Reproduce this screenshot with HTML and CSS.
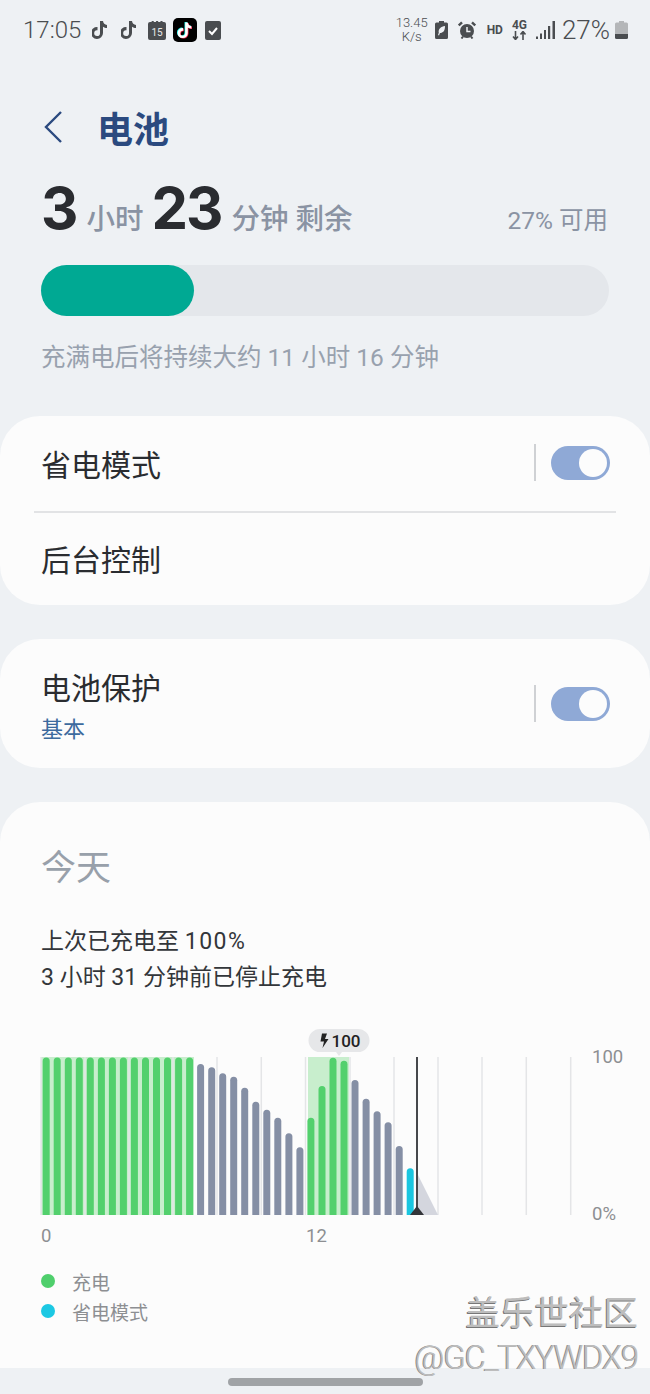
FILE: index.html
```html
<!DOCTYPE html>
<html lang="zh-CN">
<head>
<meta charset="UTF-8" />
<meta name="viewport" content="width=device-width, initial-scale=1" />
<title>电池</title>
<link rel="stylesheet" href="styles.css">
</head>
<body>

<div class="status-bar">
  <div class="status-left">
    <span class="clock">17:05</span>
    <svg class="ic-note" viewBox="0 0 16 18"><path d="M8 0h3c.2 2.2 1.8 3.8 4 4v3c-1.500 0-2.900-.5-4-1.300V12a6 6 0 1 1-5.500-6v3.200A2.900 2.900 0 1 0 8 12z"/></svg>
    <svg class="ic-note ic-note2" viewBox="0 0 16 18"><path d="M8 0h3c.2 2.200 1.800 3.800 4 4v3c-1.500 0-2.900-.5-4-1.300V12a6 6 0 1 1-5.500-6v3.200A2.900 2.900 0 1 0 8 12z"/></svg>
    <svg class="ic-cal" viewBox="0 0 18 19">
      <path fill="#4a4d50" d="M0 3a2 2 0 0 1 2-2h1.500a1.200 1.200 0 0 1 2.400 0h2a1.200 1.200 0 0 1 2.400 0h2a1.200 1.200 0 0 1 2.400 0H16a2 2 0 0 1 2 2v14a2 2 0 0 1-2 2H2a2 2 0 0 1-2-2z"/>
      <text class="cal-day" x="9" y="14.500">15</text>
    </svg>
    <svg class="ic-tiktok" viewBox="0 0 24 24">
      <rect width="24" height="24" rx="5" fill="#000"/>
      <path fill="#25f4ee" d="M11.500 4h2.600c.2 1.900 1.500 3.300 3.500 3.500v2.600c-1.300 0-2.500-.4-3.500-1.100v5.500a5.100 5.100 0 1 1-4.700-5.100v2.800a2.500 2.500 0 1 0 2.100 2.400z"/>
      <path fill="#fe2c55" d="M12.900 5h2.600c.2 1.900 1.500 3.300 3.500 3.500v2.600c-1.300 0-2.500-.4-3.500-1.100v5.500a5.100 5.100 0 1 1-4.700-5.100v2.800a2.500 2.500 0 1 0 2.100 2.400z"/>
      <path fill="#fff" d="M12.200 4.500h2.600c.2 1.900 1.500 3.300 3.500 3.500v2.600c-1.300 0-2.500-.4-3.500-1.100V15a5.100 5.100 0 1 1-4.700-5.100v2.800a2.500 2.500 0 1 0 2.100 2.400z"/>
    </svg>
    <svg class="ic-check" viewBox="0 0 16 19"><rect width="16" height="19" rx="2" fill="#4a4d50"/><path d="M4 10l3 3 5-6" fill="none" stroke="#fff" stroke-width="2"/></svg>
  </div>
  <div class="status-right">
    <span class="speed">13.45<br>K/s</span>
    <svg class="ic-saver" viewBox="0 0 13 18"><path fill="#4a4d50" d="M4 0h5v1.500h2.500a1.500 1.500 0 0 1 1.500 1.500v13.500a1.500 1.500 0 0 1-1.500 1.500h-10A1.500 1.500 0 0 1 0 16.500V3a1.500 1.500 0 0 1 1.500-1.500H4z"/><path fill="#eef1f4" d="M10 5c0 5-2 7-5 7l-1 2.500-1-.5.800-2.200C3 8 6 5.500 10 5z"/></svg>
    <svg class="ic-alarm" viewBox="0 0 18 18"><path fill="none" stroke="#4a4d50" stroke-width="2.400" d="M.8 4.500 4 1.300M17.200 4.500 14 1.300"/><circle cx="9" cy="10" r="7" fill="#4a4d50"/><path d="M9 6v4.500h3.500" fill="none" stroke="#eef1f4" stroke-width="1.500"/><path stroke="#4a4d50" stroke-width="2" d="M3.500 17.500l1.500-2M14.500 17.500l-1.500-2"/></svg>
    <span class="hd">HD</span>
    <span class="net">4G
      <svg viewBox="0 0 15 9"><path d="M3.500 0v8M1 5.500l2.500 3 2.500-3M11 9V1M8.500 3.500l2.500-3 2.500 3" fill="none" stroke="#4a4d50" stroke-width="1.600"/></svg>
    </span>
    <svg class="ic-signal" viewBox="0 0 19 18"><path fill="#4a4d50" d="M0 15.500h2V18H0zM4 12.500h2V18H4zM8 9h2v9H8zM12 5h2.200v13H12zM16.500 0H19v18h-2.500z"/></svg>
    <span class="pct">27%</span>
    <svg class="ic-batt" viewBox="0 0 13 18"><path fill="#b4b6b8" d="M4 0h5v1.500h2.500a1.500 1.500 0 0 1 1.500 1.500v10H0V3a1.500 1.500 0 0 1 1.500-1.500H4z"/><path fill="#4a4d50" d="M0 13h13v3.500a1.500 1.500 0 0 1-1.500 1.500h-10A1.500 1.500 0 0 1 0 16.500z"/></svg>
  </div>
</div>

<div class="header">
  <svg class="back" viewBox="0 0 18 32"><path d="M17 1 2 16l15 15" fill="none" stroke="#2b4a7f" stroke-width="2.400"/></svg>
  <h1>电池</h1>
</div>

<div class="summary">
  <div class="remain">
    <b>3</b><span class="unit">小时</span><b class="mins">23</b><span class="unit">分钟</span><span class="unit unit-left">剩余</span>
  </div>
  <div class="avail">27% 可用</div>
</div>

<div class="meter"><div class="meter-fill"></div></div>
<p class="full-note">充满电后将持续大约 11 小时 16 分钟</p>

<div class="card card-one">
  <div class="row row-first">
    <span class="row-title">省电模式</span>
    <span class="switch-wrap"><span class="switch"></span></span>
  </div>
  <div class="divider"></div>
  <div class="row row-second">
    <span class="row-title">后台控制</span>
  </div>
</div>

<div class="card card-two">
  <div class="row-text">
    <span class="row-title">电池保护</span>
    <span class="row-sub">基本</span>
  </div>
  <span class="switch-wrap"><span class="switch"></span></span>
</div>

<div class="card card-usage">
  <h2>今天</h2>
  <p class="usage-text">上次已充电至 <span class="full-pct">100%</span><br>3 小时 31 分钟前已停止充电</p>

  <svg class="chart" viewBox="0 0 650 226">
    <defs><clipPath id="plot"><rect x="0" y="0" width="650" height="195"/></clipPath></defs>
    <rect class="charge-bg" x="41" y="37" width="153" height="158"/>
    <rect class="charge-bg" x="308" y="37" width="41" height="158"/>
    <g class="grid">
      <path d="M41 37V195M85 37V195M129 37V195M173 37V195M217 37V195M261.300 37V195M305.500 37V195M350 37V195M394 37V195M438 37V195M482 37V195M526.300 37V195M570.700 37V195"/>
    </g>
    <path class="future" d="M417 153 438 195H417z"/>
    <g clip-path="url(#plot)">
      <g class="bars green">
        <rect x="42.700" y="37.500" /><rect x="53.700" y="37.500" /><rect x="64.800" y="37.500" /><rect x="75.800" y="37.500" /><rect x="86.800" y="37.500" /><rect x="97.900" y="37.500" /><rect x="108.900" y="37.500" /><rect x="119.900" y="37.500" /><rect x="130.900" y="37.500" /><rect x="142" y="37.500" /><rect x="153" y="37.500" /><rect x="164" y="37.500" /><rect x="175.100" y="37.500" /><rect x="186.100" y="37.500" />
        <rect x="307.400" y="97.700" /><rect x="318.500" y="66" /><rect x="329.500" y="37.700" /><rect x="340.500" y="40.700" />
      </g>
      <g class="bars gray">
        <rect x="197.100" y="44" /><rect x="208.200" y="47.300" /><rect x="219.200" y="53.300" /><rect x="230.200" y="56.700" /><rect x="241.200" y="67.700" /><rect x="252.300" y="81.700" /><rect x="263.300" y="89.700" /><rect x="274.300" y="97.700" /><rect x="285.400" y="113.300" /><rect x="296.400" y="127.300" />
        <rect x="351.500" y="60" /><rect x="362.600" y="78.700" /><rect x="373.600" y="91.300" /><rect x="384.600" y="102.300" /><rect x="395.700" y="126" />
      </g>
      <g class="bars cyan"><rect x="406.700" y="148.300" /></g>
    </g>
    <path class="now-line" d="M417 37V195"/>
    <path class="now-mark" d="M417 186 424 195H410z"/>
    <path class="pill" d="M320 9h38a11.500 11.500 0 0 1 0 23h-16l-3 4-3-4h-16a11.500 11.500 0 0 1 0-23z"/>
    <path class="bolt" d="M322 13.500h5l-2 5.500h3.500l-6 9 1.500-6.500h-3.500z"/>
    <text class="pill-text" x="331.500" y="26.500">100</text>
    <text class="axis" x="592" y="42.500">100</text>
    <text class="axis" x="592" y="200">0%</text>
    <text class="axis" x="41" y="221.500">0</text>
    <text class="axis" x="306" y="221.500">12</text>
  </svg>

  <div class="legend">
    <div class="legend-item"><span class="dot dot-green"></span>充电</div>
    <div class="legend-item"><span class="dot dot-cyan"></span>省电模式</div>
  </div>
</div>

<div class="nav-bar"><span class="home-pill"></span></div>

<div class="watermark">
  <div class="wm-big">盖乐世社区</div>
  <div class="wm-small">@GC_TXYWDX9</div>
</div>

</body>
</html>
```

FILE: styles.css
```css
* {
  box-sizing: border-box;
}
html, body {
  height: 1394px;
}
body {
  font-family: Roboto, "Noto Sans CJK SC", sans-serif;
  background: #eef1f4;
  margin: 0;
  position: relative;
  overflow: hidden;
  color: #2a2c30;
}
.status-bar {
  height: 60px;
  padding: 0 22px 0 23px;
  display: flex;
  justify-content: space-between;
  align-items: center;
  color: #4a4d50;
}
.status-left, .status-right {
  display: flex;
  align-items: center;
}
.clock {
  font-size: 24px;
  font-weight: 300;
  width: 69px;
}
.ic-note {
  width: 16px;
  height: 18px;
  fill: #4a4d50;
}
.ic-note2 {
  margin-left: 13px;
}
.ic-cal {
  width: 18px;
  height: 19px;
  margin-left: 11px;
}
.cal-day {
  font-size: 10px;
  fill: #e8e8e8;
  text-anchor: middle;
}
.ic-tiktok {
  width: 24px;
  height: 24px;
  margin-left: 7px;
}
.ic-check {
  width: 16px;
  height: 19px;
  margin-left: 8px;
}
.speed {
  font-size: 13px;
  line-height: 14px;
  text-align: center;
  font-weight: 300;
}
.ic-saver {
  width: 13px;
  height: 18px;
  margin-left: 7px;
}
.ic-alarm {
  width: 18px;
  height: 18px;
  margin-left: 10px;
}
.hd {
  font-size: 12px;
  font-weight: 700;
  margin-left: 11px;
}
.net {
  width: 15px;
  margin-left: 9px;
  font-size: 12px;
  font-weight: 700;
  line-height: 11px;
  text-align: center;
}
.net svg {
  display: block;
  width: 15px;
  height: 9px;
}
.ic-signal {
  width: 19px;
  height: 18px;
  margin-left: 9px;
}
.pct {
  font-size: 26px;
  font-weight: 300;
  margin-left: 7px;
}
.ic-batt {
  width: 13px;
  height: 18px;
  margin-left: 5px;
}

.header {
  height: 58px;
  margin-top: 38px;
  padding-left: 44px;
  display: flex;
  align-items: center;
}
.back {
  width: 18px;
  height: 32px;
}
h1 {
  margin: 0 0 0 35px;
  font-size: 36px;
  font-weight: 700;
  color: #2b4a7f;
}

.summary {
  margin-top: 16px;
  padding: 0 42px 0 41px;
  height: 72px;
  display: flex;
  justify-content: space-between;
  align-items: baseline;
}
.remain {
  font-size: 28.500px;
  font-weight: 500;
  color: #8a93a3;
  line-height: 72px;
}
.remain b {
  font-family: Inter, sans-serif;
  font-size: 58px;
  font-weight: 700;
  letter-spacing: -2px;
  color: #2a2c30;
}
.remain .mins {
  margin-left: 8px;
}
.unit {
  margin-left: 10px;
}
.unit-left {
  margin-left: 7px;
}
.avail {
  font-size: 24.500px;
  color: #8a93a3;
}

.meter {
  margin: 21px 41px 0;
  height: 51px;
  background: #e4e7eb;
  border-radius: 26px;
}
.meter-fill {
  width: 153px;
  height: 100%;
  background: #00a993;
  border-radius: 26px;
}
.full-note {
  margin: 26px 0 0 41px;
  font-size: 24.500px;
  line-height: 32px;
  color: #98a1ae;
}

.card {
  background: #fcfcfc;
  border-radius: 40px;
}
.card-one {
  margin-top: 42px;
  height: 189px;
}
.row {
  padding: 0 40px 0 41px;
  display: flex;
  justify-content: space-between;
  align-items: center;
}
.row-first {
  height: 95px;
}
.row-first .switch-wrap {
  margin-bottom: 2px;
}
.row-second {
  height: 92px;
}
.row-title {
  font-size: 30px;
  line-height: 40px;
}
.row .row-title {
  margin-top: 4px;
}
.divider {
  height: 2px;
  margin: 0 34px;
  background: #e2e3e5;
}
.switch-wrap {
  display: flex;
  align-items: center;
  height: 37px;
  padding-left: 15px;
  border-left: 2px solid #cfd1d4;
}
.switch {
  display: block;
  width: 59px;
  height: 34px;
  border-radius: 17px;
  background: #8fa9d6;
  position: relative;
}
.switch::after {
  content: "";
  position: absolute;
  right: 3px;
  top: 3px;
  width: 28px;
  height: 28px;
  border-radius: 50%;
  background: #fcfcfc;
}
.card-two {
  margin-top: 34px;
  height: 129px;
  padding: 0 40px 0 41px;
  display: flex;
  justify-content: space-between;
  align-items: center;
}
.row-text {
  display: flex;
  flex-direction: column;
  padding-top: 7px;
}
.row-sub {
  font-size: 22px;
  line-height: 30px;
  color: #3d6a9e;
  margin-top: 6px;
}

.card-usage {
  margin-top: 34px;
  height: 566px;
  border-radius: 40px 40px 0 0;
  overflow: hidden;
}
h2 {
  margin: 0;
  padding: 43px 0 0 41px;
  font-size: 35px;
  font-weight: 400;
  line-height: 48px;
  color: #98a0aa;
}
.usage-text {
  margin: 31px 0 0 41px;
  font-size: 23px;
  line-height: 36px;
  color: #33363a;
}
.full-pct {
  letter-spacing: 1.500px;
}
.chart {
  display: block;
  width: 650px;
  height: 226px;
  margin-top: 24px;
}
.charge-bg {
  fill: #c8eecd;
}
.grid path {
  fill: none;
  stroke: #e4e5e7;
  stroke-width: 1.500;
}
.bars rect {
  width: 7px;
  height: 200px;
  rx: 3.500px;
}
.green rect {
  fill: #53d06d;
}
.gray rect {
  fill: #858fa5;
}
.cyan rect {
  fill: #1ac6e0;
}
.future {
  fill: #d4d6de;
}
.now-line {
  stroke: #46484c;
  stroke-width: 2;
}
.now-mark {
  fill: #333539;
}
.pill {
  fill: #e6e7e9;
}
.bolt {
  fill: #222;
}
.pill-text {
  font-size: 17px;
  font-weight: 500;
  fill: #222;
}
.axis {
  font-size: 18.500px;
  fill: #8d8f92;
}

.legend {
  margin: 20px 0 0 41px;
}
.legend-item {
  display: flex;
  align-items: center;
  height: 30px;
  font-size: 19px;
  color: #8d8f92;
}
.dot {
  width: 14px;
  height: 14px;
  border-radius: 50%;
  margin-right: 17px;
}
.dot-green {
  background: #4fcf6c;
}
.dot-cyan {
  background: #1cc8e3;
}

.nav-bar {
  height: 26px;
  display: flex;
  justify-content: center;
  align-items: center;
  padding-top: 2px;
}
.home-pill {
  width: 195px;
  height: 8px;
  border-radius: 4px;
  background: #a0a3a6;
}

.watermark {
  position: absolute;
  right: 12px;
  top: 1292px;
  text-align: right;
  color: #bdbdbd;
}
.wm-big {
  font-size: 34.500px;
  line-height: 42px;
  text-shadow: -1px 1px 0 #777;
}
.wm-small {
  font-size: 33px;
  font-weight: 300;
  letter-spacing: -1.300px;
  line-height: 36px;
  margin-top: 6px;
  text-shadow: -1px 0 0 #8a8a8a;
}
```
